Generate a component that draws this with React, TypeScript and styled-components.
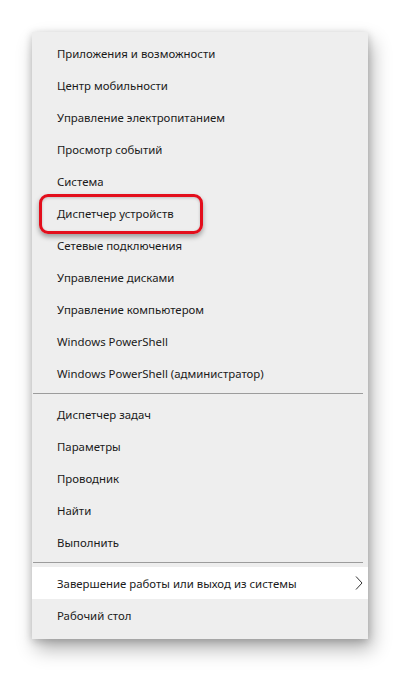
import React from "react";
import styled, { createGlobalStyle } from "styled-components";

const GlobalStyle = createGlobalStyle`
  html, body {
    margin: 0;
    padding: 0;
    background: #fff;
  }
`;

const groups = [
  [
    "Приложения и возможности",
    "Центр мобильности",
    "Управление электропитанием",
    "Просмотр событий",
    "Система",
    "Диспетчер устройств",
    "Сетевые подключения",
    "Управление дисками",
    "Управление компьютером",
    "Windows PowerShell",
    "Windows PowerShell (администратор)",
  ],
  ["Диспетчер задач", "Параметры", "Проводник", "Найти", "Выполнить"],
];

export default function App() {
  return (
    <Page>
      <GlobalStyle />
      <Menu>
        {groups.map((items, gi) => (
          <React.Fragment key={gi}>
            {items.map((label) => (
              <Item key={label}>
                {label}
                {label == "Диспетчер устройств" && <Callout />}
              </Item>
            ))}
            <Divider />
          </React.Fragment>
        ))}
        <Item $active>
          Завершение работы или выход из системы
          <Chevron viewBox="0 0 8 14">
            <path d="M1 0.5 L7 7 L1 13.5" />
          </Chevron>
        </Item>
        <Item>Рабочий стол</Item>
      </Menu>
    </Page>
  );
}

const Page = styled.div`
  padding: 32px 0 0 32px;
  height: 641px;
  font-family: "Noto Sans", "Open Sans", sans-serif;
`;

const Menu = styled.div`
  width: 336px;
  box-sizing: border-box;
  padding: 5px 0 8px 0;
  background: #eeeeee;
  display: flex;
  flex-direction: column;
  box-shadow: 4px 10px 18px rgba(0, 0, 0, 0.3), 0 2px 8px rgba(0, 0, 0, 0.2);
`;

const Item = styled.div<{ $active?: boolean }>`
  position: relative;
  height: 32px;
  display: flex;
  align-items: center;
  padding-left: 25px;
  font-size: 11.4px;
  color: #1a1a1a;
  background: ${(p) => (p.$active ? "#ffffff" : "transparent")};
`;

const Divider = styled.div`
  height: 1px;
  margin: 4px 5px 4px 1px;
  background: #9c9c9c;
`;

const Chevron = styled.svg`
  position: absolute;
  right: 5px;
  top: 9px;
  width: 8px;
  height: 14px;
  fill: none;
  stroke: #333;
  stroke-width: 1;
`;

const Callout = styled.div`
  position: absolute;
  left: 7px;
  top: -3px;
  width: 164px;
  height: 40px;
  box-sizing: border-box;
  border: 3.5px solid #e30e1c;
  border-radius: 9px;
  box-shadow: 0 3px 5px rgba(0, 0, 0, 0.35), inset 0 1px 3px rgba(0, 0, 0, 0.2);
`;
